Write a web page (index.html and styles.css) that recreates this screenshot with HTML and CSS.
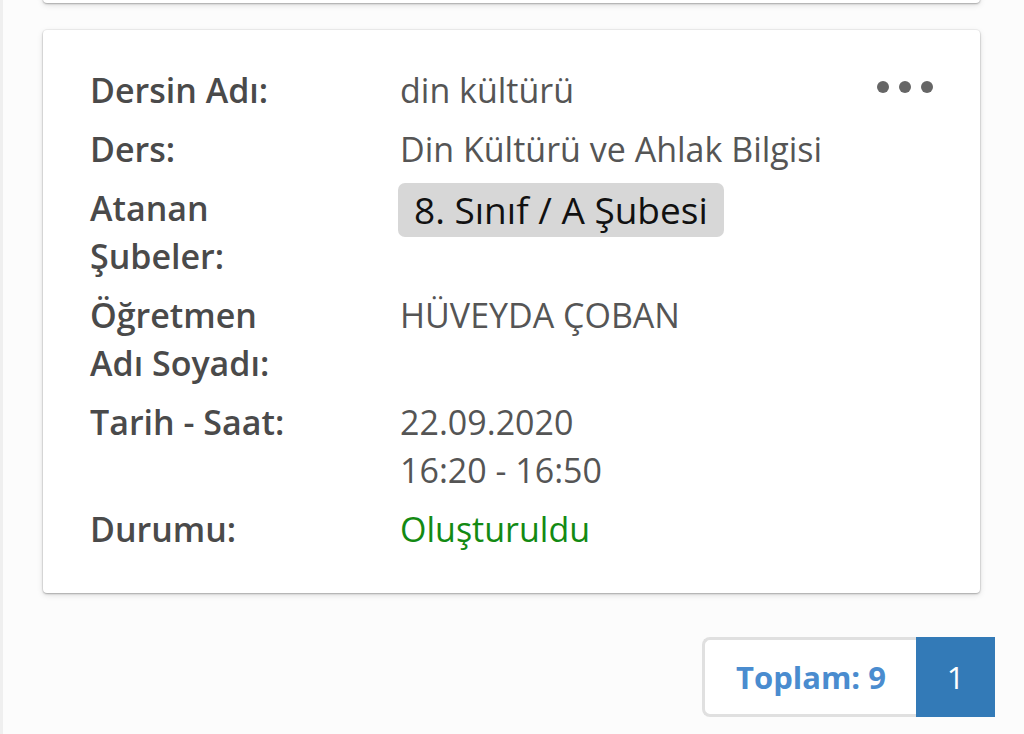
FILE: index.html
```html
<!DOCTYPE html>
<html lang="tr">
<head>
<meta charset="utf-8">
<link rel="stylesheet" href="styles.css">
</head>
<body>
<div class="page">
  <div class="card card-prev"></div>
  <div class="card">
    <div class="menu"><span></span><span></span><span></span></div>
    <div class="rows">
      <div class="label">Dersin Adı:</div>
      <div class="value">din kültürü</div>
      <div class="label">Ders:</div>
      <div class="value">Din Kültürü ve Ahlak Bilgisi</div>
      <div class="label">Atanan Şubeler:</div>
      <div class="value"><span class="badge">8. Sınıf / A Şubesi</span></div>
      <div class="label">Öğretmen Adı Soyadı:</div>
      <div class="value">HÜVEYDA ÇOBAN</div>
      <div class="label">Tarih - Saat:</div>
      <div class="value">22.09.2020<br>16:20 - 16:50</div>
      <div class="label">Durumu:</div>
      <div class="value status">Oluşturuldu</div>
    </div>
  </div>
  <div class="pager">
    <div class="total">Toplam: 9</div>
    <div class="current">1</div>
  </div>
</div>
</body>
</html>
```
FILE: styles.css
```css
html, body {
  margin: 0;
  padding: 0;
  background: #fcfcfc;
  font-family: "Open Sans", "Noto Sans", sans-serif;
}
.page {
  height: 734px;
  overflow: hidden;
  border-left: 3px solid #efefef;
  box-sizing: border-box;
  padding: 0 29px 0 40px;
}
.card {
  position: relative;
  margin-right: 15px;
  background: #fff;
  border-radius: 4px;
  box-shadow: 0 1px 2px rgba(0,0,0,0.25), 0 2px 6px rgba(0,0,0,0.12), 0 0 0 1px rgba(0,0,0,0.04);
  padding: 36px 40px 40px 47px;
}
.card-prev {
  height: 60px;
  margin-top: -57px;
  margin-bottom: 27px;
  padding: 0;
}
.menu {
  position: absolute;
  top: 51px;
  right: 47px;
  display: flex;
  gap: 10px;
}
.menu span {
  width: 12px;
  height: 12px;
  border-radius: 50%;
  background: #666;
}
.rows {
  display: grid;
  grid-template-columns: 310px 1fr;
  row-gap: 11px;
  font-size: 34px;
  line-height: 48px;
}
.label {
  font-weight: 600;
  color: #4a4a4a;
  max-width: 210px;
}
.value {
  color: #555;
}
.badge {
  display: inline-block;
  margin-left: -2px;
  margin-top: -1px;
  padding: 4px 16px 4px 16px;
  background: #d7d7d7;
  border-radius: 7px;
  color: #111;
  font-size: 37px;
  line-height: 46px;
}
.status {
  color: #138a13;
}
.pager {
  display: flex;
  justify-content: flex-end;
  margin-top: 44px;
  height: 80px;
}
.total {
  display: flex;
  align-items: center;
  padding: 0 30px 0 31px;
  border: 3px solid #e0e0e0;
  border-right: none;
  border-radius: 8px 0 0 8px;
  background: #fff;
  color: #4a8ccf;
  font-weight: 700;
  font-size: 31px;
}
.current {
  width: 79px;
  display: flex;
  align-items: center;
  justify-content: center;
  background: #337ab7;
  color: #fff;
  font-size: 31px;
}
```
